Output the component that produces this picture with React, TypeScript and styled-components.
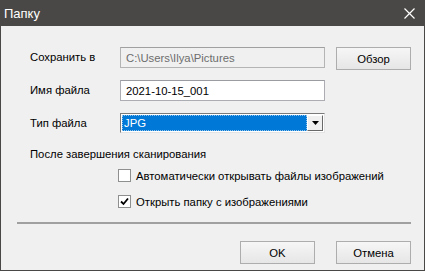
import React from "react";
import styled, { createGlobalStyle } from "styled-components";

const Global = createGlobalStyle`
  html, body { margin: 0; padding: 0; background: #f0f0f0; }
  * { box-sizing: border-box; }
`;

const Window = styled.div`
  width: 425px;
  height: 271px;
  border: 1px solid #4a4846;
  border-top: none;
  background: #f0f0f0;
  display: flex;
  flex-direction: column;
  font-family: "Liberation Sans", Arial, sans-serif;
  font-size: 11.3px;
  color: #000;
`;

const TitleBar = styled.div`
  height: 26px;
  margin: 0 -1px;
  background: #4a4846;
  display: flex;
  align-items: center;
  justify-content: space-between;
  padding: 0 10px 0 4px;
  color: #fff;
  font-size: 13px;
`;

const CloseIcon = styled.svg`
  width: 11px;
  height: 11px;
  display: block;
`;

const Body = styled.div`
  flex: 1;
  display: flex;
  flex-direction: column;
  padding: 21px 13px 0 29px;
`;

const FormGrid = styled.div`
  display: grid;
  grid-template-columns: 90px 205px 11px 75px;
  grid-auto-rows: 33px;
  align-items: start;
`;

const Label = styled.div`
  grid-column: 1;
  line-height: 16px;
  padding-top: 2px;
`;

const TextField = styled.div<{ $disabled?: boolean }>`
  grid-column: 2;
  height: 21px;
  border: 1px solid ${(p) => (p.$disabled ? "#b4b4b4" : "#abadb3")};
  border-top-color: ${(p) => (p.$disabled ? "#a0a0a0" : "#9a9ca2")};
  background: ${(p) => (p.$disabled ? "#f0f0f0" : "#fff")};
  color: ${(p) => (p.$disabled ? "#6d6d6d" : "#000")};
  padding: 0 5px;
  display: flex;
  align-items: center;
`;

const Select = styled.div`
  grid-column: 2;
  height: 20px;
  border: 1px solid #7a7a7a;
  border-right-color: #e3e3e3;
  border-bottom-color: #e3e3e3;
  background: #fff;
  display: flex;
  padding: 1px;
`;

const SelectValue = styled.div`
  flex: 1;
  background: #0078d7;
  color: #fff;
  display: flex;
  align-items: center;
  padding-left: 1px;
  border: 1px dotted #8fc3ec;
`;

const DropButton = styled.div`
  width: 16px;
  background: #f0f0f0;
  border: 1px solid #fff;
  border-right-color: #696969;
  border-bottom-color: #696969;
  display: flex;
  align-items: center;
  justify-content: center;
`;

const Button = styled.div<{ $col?: number }>`
  ${(p) => (p.$col ? `grid-column: ${p.$col};` : "")}
  width: 75px;
  height: 23px;
  border: 1px solid #adadad;
  background: linear-gradient(#f6f6f6, #e6e6e6);
  display: flex;
  align-items: center;
  justify-content: center;
`;

const Section = styled.div`
  line-height: 16px;
`;

const Checks = styled.div`
  display: flex;
  flex-direction: column;
  gap: 13px;
  padding-left: 88px;
  margin-top: 7px;
`;

const CheckRow = styled.div`
  display: flex;
  align-items: center;
  gap: 5px;
  height: 13px;
`;

const Box = styled.div`
  width: 13px;
  height: 13px;
  border: 1px solid #8e8f8f;
  background: #fff;
  display: flex;
  align-items: center;
  justify-content: center;
`;

const Separator = styled.div`
  margin: 14px 0 0 -13px;
  height: 2px;
  width: 394px;
  background: #a0a0a0;
`;

const Footer = styled.div`
  display: flex;
  justify-content: flex-end;
  gap: 21px;
  margin-top: 17px;
`;

export default function App() {
  return (
    <>
      <Global />
      <Window>
        <TitleBar>
          <span>Папку</span>
          <CloseIcon viewBox="0 0 11 11">
            <path d="M0.5 0.5 L10.5 10.5 M10.5 0.5 L0.5 10.5" stroke="#fff" strokeWidth="1.2" />
          </CloseIcon>
        </TitleBar>
        <Body>
          <FormGrid>
            <Label>Сохранить в</Label>
            <TextField $disabled>C:\Users\Ilya\Pictures</TextField>
            <Button $col={4}>Обзор</Button>
            <Label>Имя файла</Label>
            <TextField>2021-10-15_001</TextField>
            <div />
            <Label>Тип файла</Label>
            <Select>
              <SelectValue>JPG</SelectValue>
              <DropButton>
                <svg width="7" height="4" viewBox="0 0 7 4">
                  <path d="M0 0 H7 L3.5 4 Z" fill="#000" />
                </svg>
              </DropButton>
            </Select>
          </FormGrid>
          <Section>После завершения сканирования</Section>
          <Checks>
            <CheckRow>
              <Box />
              <span>Автоматически открывать файлы изображений</span>
            </CheckRow>
            <CheckRow>
              <Box>
                <svg width="9" height="9" viewBox="0 0 9 9">
                  <path d="M1 4.5 L3.5 7 L8 1.5" stroke="#000" strokeWidth="1.8" fill="none" />
                </svg>
              </Box>
              <span>Открыть папку с изображениями</span>
            </CheckRow>
          </Checks>
          <Separator />
          <Footer>
            <Button>OK</Button>
            <Button>Отмена</Button>
          </Footer>
        </Body>
      </Window>
    </>
  );
}
